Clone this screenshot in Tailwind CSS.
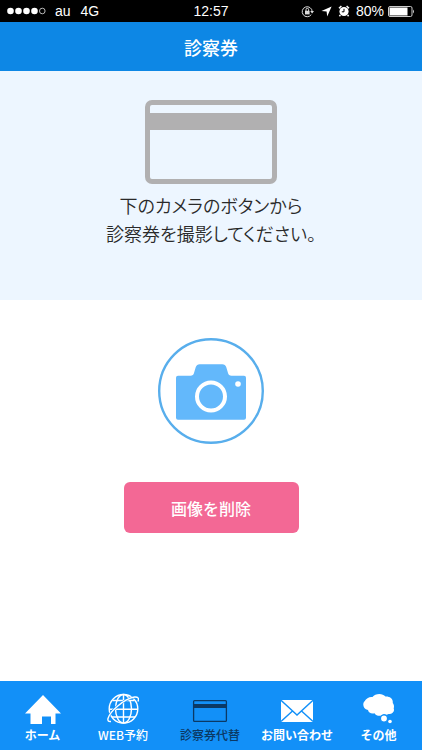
<!DOCTYPE html>
<html lang="ja">
<head>
<meta charset="utf-8">
<meta name="viewport" content="width=device-width, initial-scale=1">
<title>診察券</title>
<script src="https://cdn.jsdelivr.net/npm/@tailwindcss/browser@4"></script>
</head>
<body class="flex min-h-screen flex-col bg-white font-['Noto_Sans_CJK_JP',sans-serif]">
  <div class="grid h-[22px] grid-cols-3 items-center bg-black px-[7px] font-['Liberation_Sans',sans-serif] text-sm leading-[22px] text-white">
    <div class="flex items-center">
      <svg class="h-2 w-10" viewBox="0 0 40 8" fill="#fff" aria-hidden="true">
        <circle cx="3.5" cy="4" r="3.3"/><circle cx="11.5" cy="4" r="3.3"/><circle cx="19.5" cy="4" r="3.3"/><circle cx="27.5" cy="4" r="3.3"/>
        <circle cx="35.3" cy="4" r="2.8" fill="none" stroke="#bbb" stroke-width="1"/>
      </svg>
      <span class="ml-2">au</span>
      <span class="ml-[10px]">4G</span>
    </div>
    <div class="text-center">12:57</div>
    <div class="flex items-center justify-end">
      <svg class="h-[13px] w-[13px] shrink-0" viewBox="0 0 13 13" fill="none" stroke="#ddd" aria-hidden="true">
        <path d="M10.3 9.6A5 5 0 1 1 11.2 6.5"/>
        <path d="M9.2 6h3.8l-1.9 2.4z" fill="#ddd" stroke="none"/>
        <rect x="4" y="5.8" width="4.6" height="3.6" fill="#ddd" stroke="none"/>
        <path d="M5 6V4.6a1.3 1.3 0 0 1 2.6 0V6"/>
      </svg>
      <svg class="ml-[7px] h-[11px] w-[11px] shrink-0" viewBox="0 0 11 11" fill="#fff" aria-hidden="true"><path d="M10.6.5 6.2 10.6 5.6 5.5.5 5z"/></svg>
      <svg class="ml-[6px] h-3 w-3 shrink-0" viewBox="0 0 12 12" aria-hidden="true">
        <path d="M1 3.2 3.4 1M8.6 1 11 3.2M2.4 10l-1 1.3M9.6 10l1 1.3" stroke="#fff" stroke-width="1.5"/>
        <circle cx="6" cy="6.5" r="4.6" fill="#fff"/>
        <path d="M6 3.8v3H3.8" fill="none" stroke="#000"/>
      </svg>
      <span class="ml-[6px]">80%</span>
      <svg class="ml-1 h-[11px] w-[27px] shrink-0" viewBox="0 0 27 11" aria-hidden="true">
        <rect x=".5" y=".5" width="23.5" height="10" rx="1.5" fill="none" stroke="#ccc"/>
        <rect x="1.5" y="1.5" width="18" height="8" fill="#fff"/>
        <path d="M25 3.5q2 2 0 4z" fill="#ccc"/>
      </svg>
    </div>
  </div>

  <header class="flex h-[49px] items-center justify-center bg-[#0d87e5]">
    <h1 class="text-lg leading-6 font-medium text-white">診察券</h1>
  </header>

  <main class="flex grow flex-col">
    <section class="flex h-[229px] flex-col items-center bg-[#edf6ff] pt-[29px]">
      <svg class="h-[84px] w-[132px]" viewBox="0 0 132 84" aria-hidden="true">
        <rect x="2.5" y="2.5" width="127" height="79" rx="4.5" fill="none" stroke="#b1b0b1" stroke-width="5"/>
        <rect x="2" y="13" width="128" height="17" fill="#b1b0b1"/>
      </svg>
      <p class="mt-[7px] text-center text-lg leading-[28px] font-[350] text-[#2a2a2a] [font-feature-settings:'palt']">下のカメラのボタンから<br>診察券を撮影してください。</p>
    </section>

    <section class="flex flex-col items-center pt-[38px]">
      <button type="button" aria-label="カメラ" class="h-[106px] w-[106px] rounded-full">
        <svg class="h-full w-full" viewBox="0 0 106 106" aria-hidden="true">
          <circle cx="53" cy="53" r="51.8" fill="#fff" stroke="#58aeec" stroke-width="2.4"/>
          <path d="M20 37.8h12.500c2 0 3-1 3.500-2.800l1.700-5.800q1-3 4-3h22.600q3 0 4 3l1.700 5.800c.5 1.800 1.500 2.800 3.500 2.800H86q2 0 2 2v40q0 2-2 2H20q-2 0-2-2V39.800q0-2 2-2z" fill="#63b8fb"/>
          <circle cx="53" cy="58.500" r="14" fill="none" stroke="#fff" stroke-width="4"/>
          <circle cx="80" cy="46" r="2.800" fill="#fff"/>
        </svg>
      </button>
      <button type="button" class="mt-[38px] h-[51px] w-[175px] rounded-md bg-[#f36895] text-base font-medium text-white">画像を削除</button>
    </section>
  </main>

  <nav class="grid h-[69px] grid-cols-[85fr_76fr_98fr_76fr_87fr] bg-[#1290f8] pt-3 text-xs leading-4 font-medium whitespace-nowrap text-white">
    <a href="#" class="flex flex-col items-center gap-[2px]">
      <svg class="h-8 w-9" viewBox="0 0 36 32" fill="#fff" aria-hidden="true"><path d="M18 2 36 20.500h-5.500V31H26v-7.500h-9V31H5.500V20.500H0z"/></svg>
      <span class="font-bold">ホーム</span>
    </a>
    <a href="#" class="flex flex-col items-center gap-[2px]">
      <svg class="h-8 w-8" viewBox="0 0 32 32" fill="none" stroke="#fff" stroke-width="1.400" aria-hidden="true">
        <circle cx="16.500" cy="15.800" r="14.300"/>
        <ellipse cx="16.500" cy="15.800" rx="8" ry="14.300"/>
        <path d="M16.500 1.500v28.600M2.200 16.200h28.600M5.500 7.500h22M5 24h23"/>
        <path d="M31 8.500q1.800-5-3.500-4.500C17 6 3 18 1 25.500q-.8 3.500 3 3" stroke="#1290f8" stroke-width="2.400"/>
        <path d="M31 8.500q1.800-5-3.500-4.500C17 6 3 18 1 25.500q-.8 3.500 3 3"/>
      </svg>
      <span>WEB予約</span>
    </a>
    <a href="#" aria-current="page" class="flex flex-col items-center gap-[2px] text-[#0b3965]">
      <svg class="h-8 w-9" viewBox="0 0 36 32" fill="none" aria-hidden="true">
        <rect x="1.600" y="7.600" width="32.800" height="20.800" rx="1" stroke="currentColor" stroke-width="1.300"/>
        <path d="M1.500 13h33" stroke="currentColor" stroke-width="4"/>
      </svg>
      <span>診察券代替</span>
    </a>
    <a href="#" class="flex flex-col items-center gap-[2px]">
      <svg class="h-8 w-8" viewBox="0 0 32 32" aria-hidden="true">
        <path d="M0 7h32v22H0z" fill="#fff"/>
        <path d="M0 7.200 16 22 32 7.200M0 28.500l11.500-10.500M32 28.500 20.500 18" fill="none" stroke="#1290f8" stroke-width="1.400"/>
      </svg>
      <span class="font-bold">お問い合わせ</span>
    </a>
    <a href="#" class="flex flex-col items-center gap-[2px]">
      <svg class="h-8 w-8" viewBox="0 0 32 32" fill="#fff" aria-hidden="true">
        <path d="M9.500 4C12 .3 19.500-.3 22.500 3.500c4.500-.3 8 2.500 7.200 6.500 1.500 1.800 1.500 3.500 1 5.500 1.300 3.500-1.700 6-5.200 5.500-1.500 1-3 1-4.500 0-3 2.800-7.500 2.300-9.500-.8-3.500.8-6-.7-6.500-3.200C-.3 16 -.8 10 1.800 8 3 5.300 6.500 3.500 9.500 4z"/>
        <circle cx="21" cy="25.500" r="3.600" stroke="#1290f8" stroke-width="1.400"/>
        <circle cx="27" cy="28.500" r="1.800"/>
      </svg>
      <span class="font-bold">その他</span>
    </a>
  </nav>
</body>
</html>
